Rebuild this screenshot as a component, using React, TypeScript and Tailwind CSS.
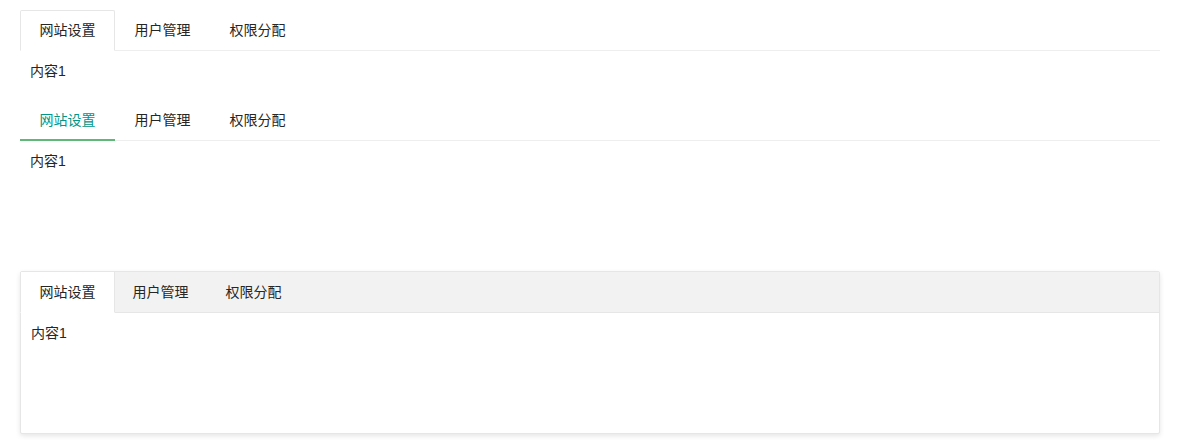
import React from "react";

const tabs = ["网站设置", "用户管理", "权限分配"];
const font = { fontFamily: '"Liberation Sans", "Noto Sans CJK SC", sans-serif' };

function DefaultTab() {
  return (
    <div className="mt-[10px]">
      <ul className="flex h-[41px] border-b border-[#eeeeee]">
        {tabs.map((t, i) => (
          <li key={t} className="relative w-[95px] h-[40px] text-center leading-[40px] text-[14px] text-[#262626]">
            {t}
            {i === 0 && (
              <span className="absolute left-0 top-0 w-full h-[41px] border border-[#e6e6e6] border-b-white rounded-t-[2px] pointer-events-none" />
            )}
          </li>
        ))}
      </ul>
      <div className="p-[10px] leading-[20px] h-[39px] text-[14px] text-[#262626]">内容1</div>
    </div>
  );
}

function BriefTab() {
  return (
    <div className="mt-[10px]">
      <ul className="flex h-[41px] border-b border-[#eeeeee]">
        {tabs.map((t, i) => (
          <li
            key={t}
            className={
              i === 0
                ? "relative w-[95px] h-[40px] text-center leading-[40px] text-[14px] text-[#009688]"
                : "relative w-[95px] h-[40px] text-center leading-[40px] text-[14px] text-[#262626]"
            }
          >
            {t}
            {i === 0 && (
              <span className="absolute left-0 top-0 w-full h-[41px] border-b-2 border-[#5FB878] pointer-events-none" />
            )}
          </li>
        ))}
      </ul>
      <div className="p-[10px] leading-[20px] h-[39px] text-[14px] text-[#262626]">内容1</div>
    </div>
  );
}

function CardTab() {
  return (
    <div className="mt-[91px] border border-[#e6e6e6] rounded-[2px] shadow-[0_2px_5px_0_rgba(0,0,0,0.1)] bg-white">
      <ul className="flex h-[41px] border-b border-[#e6e6e6] bg-[#f2f2f2]">
        {tabs.map((t, i) => (
          <li
            key={t}
            className={
              i === 0
                ? "relative -mx-px w-[95px] h-[40px] text-center leading-[40px] text-[14px] text-[#262626] bg-white"
                : "relative -mx-px w-[95px] h-[40px] text-center leading-[40px] text-[14px] text-[#262626]"
            }
          >
            {t}
            {i === 0 && (
              <span className="absolute left-0 top-0 w-full h-[41px] border border-t-0 border-[#e6e6e6] border-b-white pointer-events-none" />
            )}
          </li>
        ))}
      </ul>
      <div className="h-[120px] p-[10px] leading-[20px] text-[14px] text-[#262626]">内容1</div>
    </div>
  );
}

export default function App() {
  return (
    <div className="bg-white min-h-[444px]" style={font}>
      <div className="ml-5 w-[1140px] flex flex-col">
        <DefaultTab />
        <BriefTab />
        <CardTab />
      </div>
    </div>
  );
}
